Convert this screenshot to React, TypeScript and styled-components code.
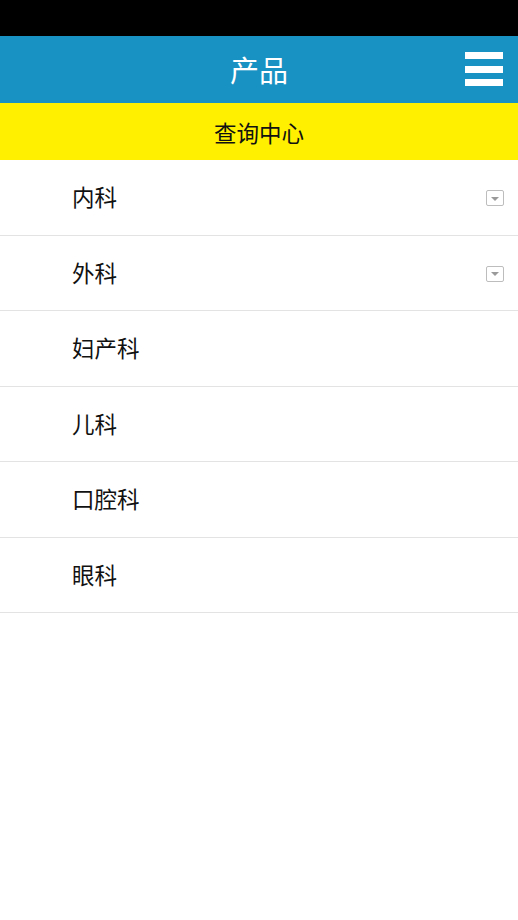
import React from "react";
import styled, { createGlobalStyle } from "styled-components";

const GlobalStyle = createGlobalStyle`
  html, body { margin: 0; padding: 0; background: #ffffff; }
  body { font-family: "Noto Sans CJK SC", "Noto Sans", sans-serif; }
  * { box-sizing: border-box; }
`;

const Page = styled.div`
  width: 518px;
  min-height: 920px;
  background: #ffffff;
  display: flex;
  flex-direction: column;
`;

const StatusBar = styled.div`
  height: 36px;
  background: #000000;
`;

const Header = styled.header`
  height: 67px;
  background: #1891c3;
  display: flex;
  align-items: center;
  justify-content: center;
  position: relative;
`;

const Title = styled.h1`
  margin: 0;
  color: #ffffff;
  font-size: 29px;
  font-weight: 400;
  line-height: 1;
`;

const MenuButton = styled.button`
  position: absolute;
  right: 15px;
  top: 16px;
  width: 38px;
  padding: 0;
  border: 0;
  background: transparent;
  display: flex;
  flex-direction: column;
  gap: 6.5px;
`;

const MenuBar = styled.span`
  display: block;
  height: 7px;
  background: #ffffff;
`;

const SubHeader = styled.div`
  height: 57px;
  background: #fff000;
  display: flex;
  align-items: center;
  justify-content: center;
  font-size: 22.5px;
  color: #111111;
`;

const List = styled.ul`
  list-style: none;
  margin: 0;
  padding: 0;
`;

const Row = styled.li`
  height: 75.5px;
  border-bottom: 1px solid #e3e3e3;
  display: flex;
  align-items: center;
  justify-content: space-between;
  padding: 0 14px 0 72px;
  font-size: 22.5px;
  color: #111111;
`;

const Label = styled.span`
  line-height: 1;
  margin-top: -2px;
`;

const DropIcon = styled.span`
  width: 18px;
  height: 16px;
  border: 1.5px solid #bdbdbd;
  border-radius: 2px;
  display: flex;
  align-items: center;
  justify-content: center;
  margin-top: 2px;
  &::after {
    content: "";
    width: 0;
    height: 0;
    margin-top: 1px;
    border-left: 4px solid transparent;
    border-right: 4px solid transparent;
    border-top: 4px solid #9a9a9a;
  }
`;

const items = [
  { name: "内科", drop: true },
  { name: "外科", drop: true },
  { name: "妇产科", drop: false },
  { name: "儿科", drop: false },
  { name: "口腔科", drop: false },
  { name: "眼科", drop: false },
];

export default function App() {
  return (
    <>
      <GlobalStyle />
      <Page>
        <StatusBar />
        <Header>
          <Title>产品</Title>
          <MenuButton aria-label="menu">
            <MenuBar />
            <MenuBar />
            <MenuBar />
          </MenuButton>
        </Header>
        <SubHeader>查询中心</SubHeader>
        <List>
          {items.map((it) => (
            <Row key={it.name}>
              <Label>{it.name}</Label>
              {it.drop && <DropIcon />}
            </Row>
          ))}
        </List>
      </Page>
    </>
  );
}
